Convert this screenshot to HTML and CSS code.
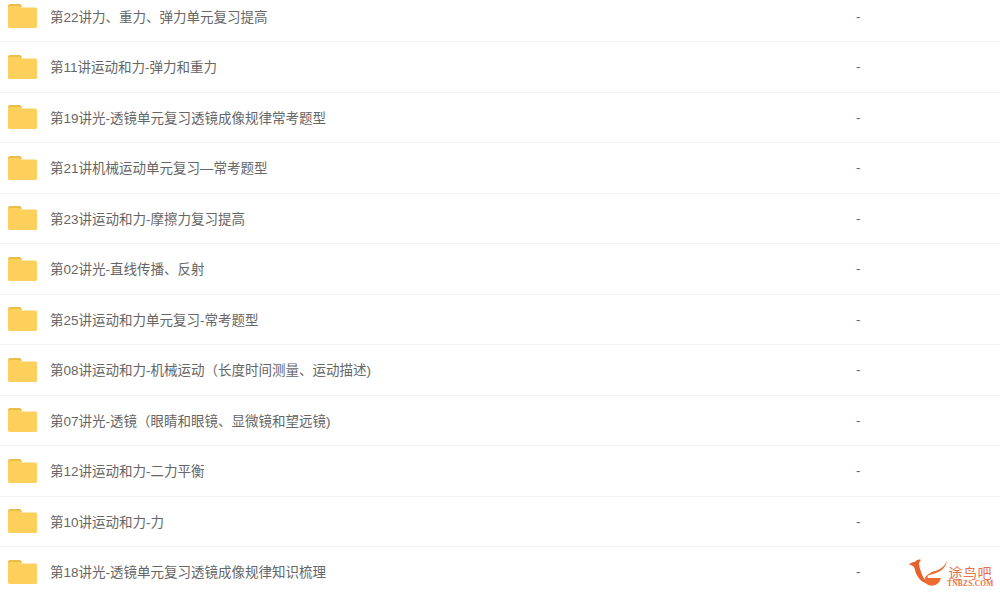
FILE: index.html
```html
<!DOCTYPE html>
<html lang="zh-CN">
<head>
  <meta charset="UTF-8">
  <title>文件列表</title>
  <link rel="stylesheet" href="styles.css">
</head>
<body>
  <svg width="0" height="0" class="defs">
    <symbol id="folder" viewBox="0 0 29 24">
      <path d="M0 2a2 2 0 0 1 2-2h9.500a2 2 0 0 1 2 1.500L14 3H0z" fill="#e9bd4a"/>
      <path d="M0 3.500A1.500 1.500 0 0 1 1.500 2H12l1.500 1.500h14A1.500 1.500 0 0 1 29 5v17.500a1.500 1.500 0 0 1-1.500 1.500h-26A1.500 1.500 0 0 1 0 22.500z" fill="#fdd05c"/>
    </symbol>
  </svg>

  <div class="file-list">
    <div class="file-row"><svg class="folder"><use href="#folder"/></svg><span class="name">第22讲力、重力、弹力单元复习提高</span><span class="size">-</span></div>
    <div class="file-row"><svg class="folder"><use href="#folder"/></svg><span class="name">第11讲运动和力-弹力和重力</span><span class="size">-</span></div>
    <div class="file-row"><svg class="folder"><use href="#folder"/></svg><span class="name">第19讲光-透镜单元复习透镜成像规律常考题型</span><span class="size">-</span></div>
    <div class="file-row"><svg class="folder"><use href="#folder"/></svg><span class="name">第21讲机械运动单元复习—常考题型</span><span class="size">-</span></div>
    <div class="file-row"><svg class="folder"><use href="#folder"/></svg><span class="name">第23讲运动和力-摩擦力复习提高</span><span class="size">-</span></div>
    <div class="file-row"><svg class="folder"><use href="#folder"/></svg><span class="name">第02讲光-直线传播、反射</span><span class="size">-</span></div>
    <div class="file-row"><svg class="folder"><use href="#folder"/></svg><span class="name">第25讲运动和力单元复习-常考题型</span><span class="size">-</span></div>
    <div class="file-row"><svg class="folder"><use href="#folder"/></svg><span class="name">第08讲运动和力-机械运动（长度时间测量、运动描述)</span><span class="size">-</span></div>
    <div class="file-row"><svg class="folder"><use href="#folder"/></svg><span class="name">第07讲光-透镜（眼睛和眼镜、显微镜和望远镜)</span><span class="size">-</span></div>
    <div class="file-row"><svg class="folder"><use href="#folder"/></svg><span class="name">第12讲运动和力-二力平衡</span><span class="size">-</span></div>
    <div class="file-row"><svg class="folder"><use href="#folder"/></svg><span class="name">第10讲运动和力-力</span><span class="size">-</span></div>
    <div class="file-row"><svg class="folder"><use href="#folder"/></svg><span class="name">第18讲光-透镜单元复习透镜成像规律知识梳理</span><span class="size">-</span></div>
  </div>

  <!-- watermark -->
  <div class="logo">
    <svg class="logo-mark" viewBox="0 0 39 30">
      <path d="M1 7c2-3 4-3 6-3 1-2 4-3 6-2-1 1-2 2-2 4 1 6 3 13 9 20-8-2-12-9-13-14-.5-3-2-5-6-5z" fill="#e8602c"/>
      <path d="M39 2c-2 8-9 10-15 12-6 3-8 6-7 9 1 5 8 6 12 3 2-1 3-3 4-6H21c-2 0-2-2 0-3 9-2 17-5 18-15z" fill="#ee6a2f"/>
    </svg>
    <div class="logo-text">
      <span class="logo-cn">途鸟吧</span>
      <span class="logo-en">TNBZS.COM</span>
    </div>
  </div>
</body>
</html>
```

FILE: styles.css
```css
body {
  margin: 0;
  background: #fff;
  font-family: "Liberation Sans", "Noto Sans CJK SC", sans-serif;
  overflow: hidden;
  height: 593px;
  position: relative;
}

.defs {
  position: absolute;
}

.file-list {
  margin-top: -8.5px;
}

.file-row {
  display: flex;
  align-items: center;
  height: 49.5px;
  border-bottom: 1px solid #f3f3f3;
}

.folder {
  width: 29px;
  height: 24px;
  margin-left: 8px;
  flex: none;
}

.name {
  margin-left: 13px;
  padding-bottom: 1px;
  width: 806px;
  font-size: 13.5px;
  color: #666;
  white-space: nowrap;
}

.size {
  font-size: 13.5px;
  color: #666;
}

.logo {
  position: absolute;
  left: 908px;
  top: 558px;
  display: flex;
  align-items: flex-end;
}

.logo-mark {
  width: 39px;
  height: 30px;
}

.logo-text {
  display: flex;
  flex-direction: column;
  align-items: center;
  margin-bottom: 1px;
}

.logo-cn {
  font-size: 14px;
  line-height: 14px;
  letter-spacing: 0.5px;
  color: #e8704a;
}

.logo-en {
  font-family: "Liberation Serif", serif;
  font-size: 7.5px;
  font-weight: bold;
  line-height: 7px;
  letter-spacing: 0.2px;
  color: #e8704a;
}
```
